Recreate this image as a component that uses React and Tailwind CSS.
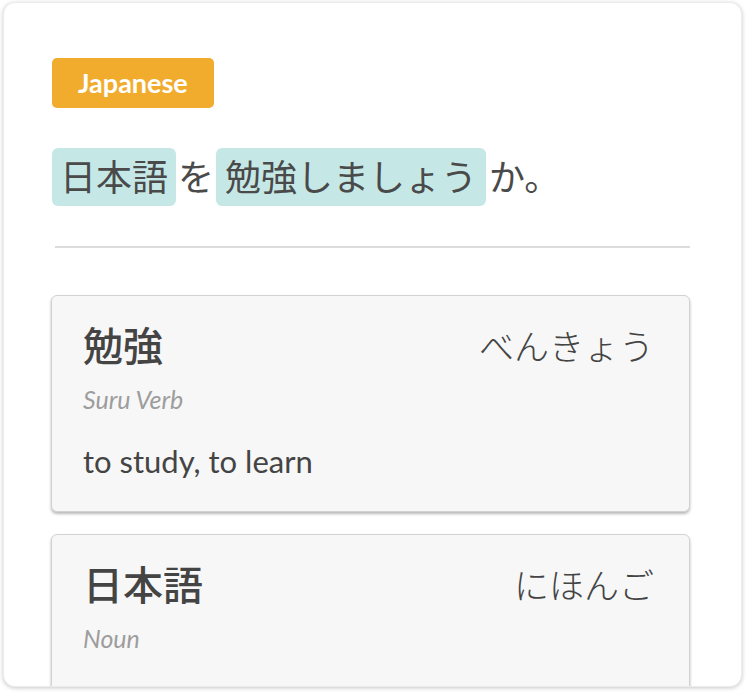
import React from 'react';

const words = [
  { kanji: '勉強', reading: 'べんきょう', type: 'Suru Verb', meaning: 'to study, to learn' },
  { kanji: '日本語', reading: 'にほんご', type: 'Noun', meaning: 'Japanese language' },
];

function WordCard({ word }) {
  return (
    <div className="rounded-[6px] border border-[#d2d2d2] bg-[#f7f7f7] px-[31px] pt-[22px] pb-[30px] shadow-[0_2px_3px_rgba(0,0,0,0.28)]">
      <div className="flex items-center justify-between">
        <span className="text-[40px] leading-[56px] font-medium text-[#444]">{word.kanji}</span>
        <span className="text-[35px] leading-[56px] font-light text-[#444] pr-[4px]">{word.reading}</span>
      </div>
      <div className="mt-[9px] text-[25px] leading-[32px] italic text-[#9d9d9d]">{word.type}</div>
      <div className="mt-[26px] text-[31px] leading-[40px] text-[#444]">{word.meaning}</div>
    </div>
  );
}

export default function App() {
  return (
    <div className="bg-white w-[746px] h-[692px] pt-[2px] pl-[3px] font-['Lato','Noto_Sans_CJK_JP',sans-serif]">
      <div className="w-[739px] h-[685px] overflow-hidden rounded-[12px] border border-[#ececec] bg-white shadow-[0_1px_4px_rgba(0,0,0,0.22)] pl-[47px] pr-[51px] pt-[55px]">
        <span className="inline-block rounded-[5px] bg-[#f2ac2d] ml-[1px] px-[26px] py-[7px] text-[27px] leading-[36px] font-bold text-white">
          Japanese
        </span>

        {/* Sentence with highlighted vocab */}
        <div className="mt-[40px] flex items-center ml-[1px] text-[36px] leading-[48px] text-[#4a4a4a]">
          <span className="rounded-[6px] bg-[#c5e8e6] px-[8px] py-[5px]">日本語</span>
          <span className="mx-[2px]">を</span>
          <span className="rounded-[6px] bg-[#c5e8e6] px-[9px] py-[5px]">勉強しましょう</span>
          <span className="ml-[3px]">か。</span>
        </div>

        <div className="mt-[40px] ml-[4px] h-[2px] bg-[#dcdcdc]" />

        <div className="mt-[47px] flex flex-col gap-[22px]">
          {words.map(w => (
            <WordCard key={w.kanji} word={w} />
          ))}
        </div>
      </div>
    </div>
  );
}
